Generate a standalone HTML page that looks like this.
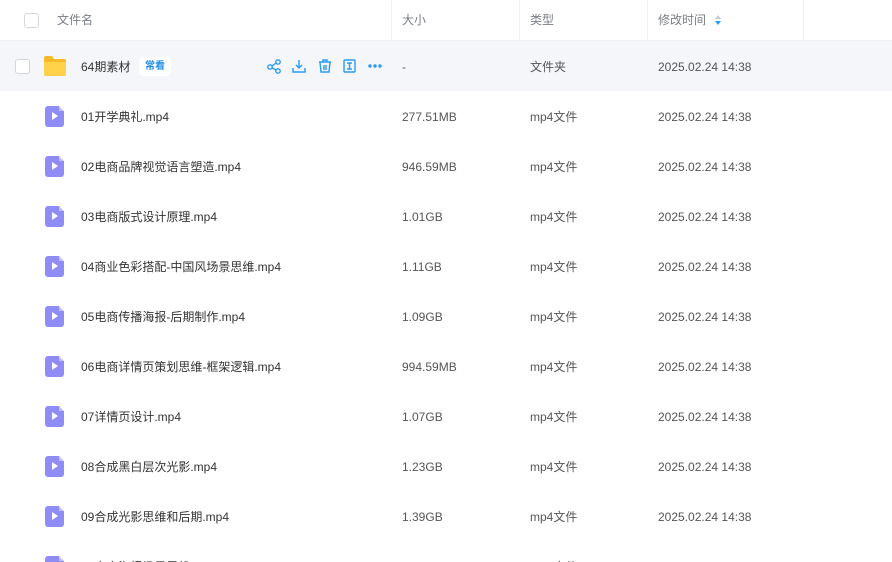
<!DOCTYPE html><html><head><meta charset="utf-8"><style>
html,body{margin:0;width:892px;height:562px;overflow:hidden}
body{background:#fff;font-family:"Liberation Sans","Noto Sans CJK SC",sans-serif;font-size:12px;position:relative}
.hd{position:absolute;left:0;top:0;width:892px;height:40px;border-bottom:1px solid #eef0f3;color:#7a7e85}
.hd span{position:absolute;top:0;line-height:40px}
.dv{position:absolute;top:0;width:1px;height:40px;background:#f0f1f3}
.cb{position:absolute;width:13px;height:13px;border:1px solid #d4d6da;border-radius:3px;background:#fff}
.row{position:absolute;left:0;width:892px;height:50px;color:#333;overflow:hidden}
.row span{position:absolute;top:1px;line-height:50px;height:50px}
.sz,.ty,.tm{color:#555}
.vid{position:absolute;left:45px;top:15px;width:19px;height:21px;border-radius:3px;background:#8f8cf5}
.vid:before{content:"";position:absolute;right:0;top:0;border-style:solid;border-width:0 5px 5px 0;border-color:transparent #fff #c3c0fb transparent}
.vid:after{content:"";position:absolute;left:7px;top:6px;border-style:solid;border-width:4.5px 0 4.5px 6px;border-color:transparent transparent transparent #fff}
</style></head><body>
<div class="hd">
<div class="cb" style="left:24px;top:13px"></div>
<span style="left:57px">文件名</span>
<div class="dv" style="left:391px"></div><span style="left:402px">大小</span>
<div class="dv" style="left:519px"></div><span style="left:530px">类型</span>
<div class="dv" style="left:647px"></div><span style="left:658px">修改时间</span>
<svg style="position:absolute;left:714px;top:14px" width="8" height="12"><path d="M4 1L7 5H1Z" fill="#c8ccd2"/><path d="M4 11L7 7H1Z" fill="#2a9bf0"/></svg>
<div class="dv" style="left:803px"></div>
</div>
<div class="row" style="top:41px;background:#f5f6fa">
<div class="cb" style="left:15px;top:18px"></div>
<svg style="position:absolute;left:43px;top:14px" width="24" height="22"><path d="M1 3a2 2 0 0 1 2-2h6l2 3h10a2 2 0 0 1 2 2v13a2 2 0 0 1-2 2H3a2 2 0 0 1-2-2z" fill="#f7b928"/><path d="M1 7h22v12a2 2 0 0 1-2 2H3a2 2 0 0 1-2-2z" fill="#ffd24a"/></svg>
<span style="left:81px">64期素材</span>
<div style="position:absolute;left:139px;top:16px;width:32px;height:19px;background:#fff;border-radius:4px;color:#1f8de8;font-size:10px;line-height:19px;text-align:center;font-weight:bold">常看</div>
<svg style="position:absolute;left:266px;top:17px" width="120" height="16" fill="none" stroke="#2a9bf0" stroke-width="1.4">
<circle cx="4" cy="9" r="2.2"/><circle cx="12" cy="4" r="2.2"/><circle cx="12" cy="13" r="2.2"/><path d="M6 8l4-3M6 10l4 2"/>
<path d="M33 2v8M30 7l3 3 3-3M27 10v4h12v-4"/>
<path d="M53 4h12M57 4V2h4v2M54 4l1 10h8l1-10M58 7v5M60 7v5"/>
<rect x="78" y="2" width="11" height="12" rx="1"/><path d="M81 5h5M83.5 5v6M81 11h5"/>
<circle cx="104" cy="8" r="1" fill="#2a9bf0"/><circle cx="109" cy="8" r="1" fill="#2a9bf0"/><circle cx="114" cy="8" r="1" fill="#2a9bf0"/>
</svg>
<span class="sz" style="left:402px">-</span><span class="ty" style="left:530px">文件夹</span><span class="tm" style="left:658px">2025.02.24 14:38</span>
</div>
<div class="row" style="top:91px"><div class="vid"></div><span style="left:81px">01开学典礼.mp4</span><span class="sz" style="left:402px">277.51MB</span><span class="ty" style="left:530px">mp4文件</span><span class="tm" style="left:658px">2025.02.24 14:38</span></div>
<div class="row" style="top:141px"><div class="vid"></div><span style="left:81px">02电商品牌视觉语言塑造.mp4</span><span class="sz" style="left:402px">946.59MB</span><span class="ty" style="left:530px">mp4文件</span><span class="tm" style="left:658px">2025.02.24 14:38</span></div>
<div class="row" style="top:191px"><div class="vid"></div><span style="left:81px">03电商版式设计原理.mp4</span><span class="sz" style="left:402px">1.01GB</span><span class="ty" style="left:530px">mp4文件</span><span class="tm" style="left:658px">2025.02.24 14:38</span></div>
<div class="row" style="top:241px"><div class="vid"></div><span style="left:81px">04商业色彩搭配-中国风场景思维.mp4</span><span class="sz" style="left:402px">1.11GB</span><span class="ty" style="left:530px">mp4文件</span><span class="tm" style="left:658px">2025.02.24 14:38</span></div>
<div class="row" style="top:291px"><div class="vid"></div><span style="left:81px">05电商传播海报-后期制作.mp4</span><span class="sz" style="left:402px">1.09GB</span><span class="ty" style="left:530px">mp4文件</span><span class="tm" style="left:658px">2025.02.24 14:38</span></div>
<div class="row" style="top:341px"><div class="vid"></div><span style="left:81px">06电商详情页策划思维-框架逻辑.mp4</span><span class="sz" style="left:402px">994.59MB</span><span class="ty" style="left:530px">mp4文件</span><span class="tm" style="left:658px">2025.02.24 14:38</span></div>
<div class="row" style="top:391px"><div class="vid"></div><span style="left:81px">07详情页设计.mp4</span><span class="sz" style="left:402px">1.07GB</span><span class="ty" style="left:530px">mp4文件</span><span class="tm" style="left:658px">2025.02.24 14:38</span></div>
<div class="row" style="top:441px"><div class="vid"></div><span style="left:81px">08合成黑白层次光影.mp4</span><span class="sz" style="left:402px">1.23GB</span><span class="ty" style="left:530px">mp4文件</span><span class="tm" style="left:658px">2025.02.24 14:38</span></div>
<div class="row" style="top:491px"><div class="vid"></div><span style="left:81px">09合成光影思维和后期.mp4</span><span class="sz" style="left:402px">1.39GB</span><span class="ty" style="left:530px">mp4文件</span><span class="tm" style="left:658px">2025.02.24 14:38</span></div>
<div class="row" style="top:541px;height:21px"><div class="vid"></div><span style="left:81px">10电商海报场景思维.mp4</span><span class="sz" style="left:402px">1.20GB</span><span class="ty" style="left:530px">mp4文件</span><span class="tm" style="left:658px">2025.02.24 14:38</span></div>
</body></html>
